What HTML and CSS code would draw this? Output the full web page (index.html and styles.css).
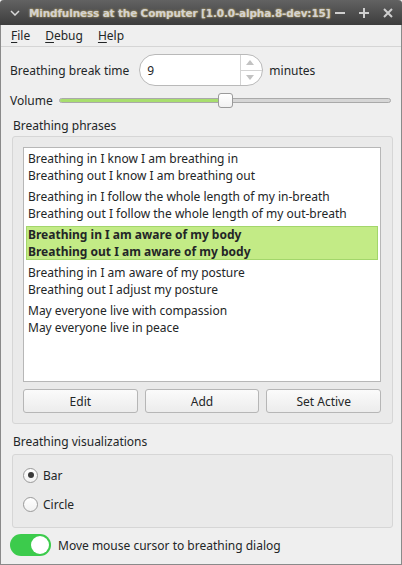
FILE: index.html
```html
<!DOCTYPE html>
<html>
<head>
<meta charset="utf-8">
<link rel="stylesheet" href="styles.css">
</head>
<body>
<div class="window">
  <div class="titlebar">
    <svg class="tb-menu" width="10" height="6" viewBox="0 0 10 6"><path d="M1 1 L5 5 L9 1" fill="none" stroke="#d8d8d8" stroke-width="1.5"/></svg>
    <span class="title">Mindfulness at the Computer [1.0.0-alpha.8-dev:15]</span>
    <span class="tb-btns">
      <svg width="10" height="10" viewBox="0 0 10 10"><path d="M0 5 H10" stroke="#cfcfcf" stroke-width="2"/></svg>
      <svg width="10" height="10" viewBox="0 0 10 10"><path d="M0 5 H10 M5 0 V10" stroke="#cfcfcf" stroke-width="2"/></svg>
      <svg width="10" height="10" viewBox="0 0 10 10"><path d="M1 1 L9 9 M9 1 L1 9" stroke="#cfcfcf" stroke-width="2"/></svg>
    </span>
  </div>
  <div class="menubar">
    <span class="menu"><u>F</u>ile</span>
    <span class="menu"><u>D</u>ebug</span>
    <span class="menu"><u>H</u>elp</span>
  </div>
  <div class="content">
    <div class="row spin-row">
      <span class="label">Breathing break time</span>
      <div class="spinbox">
        <span class="spin-val">9</span>
        <div class="spin-arrows">
          <div class="arrow up"><svg width="8" height="5" viewBox="0 0 8 5"><path d="M0 5 L4 0 L8 5Z" fill="#c2c2c2"/></svg></div>
          <div class="arrow down"><svg width="8" height="5" viewBox="0 0 8 5"><path d="M0 0 L4 5 L8 0Z" fill="#c2c2c2"/></svg></div>
        </div>
      </div>
      <span class="label unit">minutes</span>
    </div>
    <div class="row vol-row">
      <span class="label">Volume</span>
      <div class="slider">
        <div class="groove">
          <div class="fill" style="width: 49.5%"></div>
        </div>
        <div class="handle" style="left: 48%"></div>
      </div>
    </div>
    <div class="section-title">Breathing phrases</div>
    <div class="frame phrases-frame">
      <div class="list">
        <div class="item"><div>Breathing in I know I am breathing in</div><div>Breathing out I know I am breathing out</div></div>
        <div class="item"><div>Breathing in I follow the whole length of my in-breath</div><div>Breathing out I follow the whole length of my out-breath</div></div>
        <div class="item active"><div>Breathing in I am aware of my body</div><div>Breathing out I am aware of my body</div></div>
        <div class="item"><div>Breathing in I am aware of my posture</div><div>Breathing out I adjust my posture</div></div>
        <div class="item"><div>May everyone live with compassion</div><div>May everyone live in peace</div></div>
      </div>
      <div class="buttons">
        <button class="btn">Edit</button>
        <button class="btn">Add</button>
        <button class="btn">Set Active</button>
      </div>
    </div>
    <div class="section-title vis-title">Breathing visualizations</div>
    <div class="frame vis-frame">
      <div class="radio-row"><span class="radio checked"></span><span>Bar</span></div>
      <div class="radio-row"><span class="radio"></span><span>Circle</span></div>
    </div>
    <div class="row toggle-row">
      <span class="toggle"><span class="knob"></span></span>
      <span class="label">Move mouse cursor to breathing dialog</span>
    </div>
  </div>
</div>
</body>
</html>
```
FILE: styles.css
```css
* { box-sizing: border-box; }
html, body { margin: 0; padding: 0; }
body {
  width: 402px;
  height: 565px;
  background: #efefef;
  font-family: "Noto Sans", "DejaVu Sans", sans-serif;
  font-size: 12px;
  color: #232627;
  overflow: hidden;
}
.window {
  width: 402px;
  height: 565px;
  border: 1px solid #8a8a8a;
  border-top: none;
  border-radius: 4px 4px 0 0;
  display: flex;
  flex-direction: column;
}
.titlebar {
  height: 25px;
  margin: 0 -1px;
  background: linear-gradient(#626262, #3d3d3d);
  border-radius: 4px 4px 0 0;
  display: flex;
  align-items: center;
  padding: 0 9px 0 10px;
  color: #e6e6e6;
}
.tb-menu { margin-right: 9px; flex: none; }
.title {
  font-family: "DejaVu Sans", sans-serif;
  font-weight: bold;
  font-size: 10.5px;
  letter-spacing: -0.15px;
  white-space: nowrap;
  color: #d2d2d2;
  text-shadow: 0 0 2px #e8c868;
}
.tb-btns {
  margin-left: auto;
  display: flex;
  gap: 14px;
}
.menubar {
  height: 22px;
  display: flex;
  align-items: center;
  padding-left: 10px;
  border-bottom: 1px solid #d5d5d5;
}
.menu { margin-right: 15px; }
.menu u { text-decoration-thickness: 1px; text-underline-offset: 2px; }
.content {
  padding: 7px 10px 0 9px;
  display: flex;
  flex-direction: column;
}
.row { display: flex; align-items: center; }
.spin-row { gap: 10px; height: 32px; }
.spin-row .unit { margin-left: -4px; }
.spinbox {
  width: 124px;
  height: 32px;
  background: #fff;
  border: 1px solid #b9b9b9;
  border-radius: 16px;
  display: flex;
  align-items: stretch;
  overflow: hidden;
}
.spin-val { flex: 1; padding-left: 7px; display: flex; align-items: center; }
.spin-arrows {
  width: 22px;
  border-left: 1px solid #d3d3d3;
  display: flex;
  flex-direction: column;
}
.arrow { flex: 1; display: flex; align-items: center; justify-content: center; padding-right: 3px; }
.arrow.up { border-bottom: 1px solid #d3d3d3; }
.vol-row { gap: 6px; margin-top: 7px; height: 14px; }
.slider { position: relative; flex: 1; height: 14px; display: flex; align-items: center; }
.groove {
  width: 100%;
  height: 5px;
  background: #d6d6d6;
  border: 1px solid #a9a9a9;
  border-radius: 3px;
  overflow: hidden;
}
.fill { height: 100%; background: #a8de6e; border-right: 1px solid #7fbf4a; }
.handle {
  position: absolute;
  top: 0;
  width: 15px;
  height: 15px;
  background: linear-gradient(#ffffff, #f1f1f1);
  border: 1px solid #9a9a9a;
  border-radius: 3px;
}
.section-title { margin-top: 10px; padding-left: 3px; height: 18px; line-height: 18px; }
.frame {
  margin-top: 1px;
  margin-left: 2px;
  width: 381px;
  background: #eaeaea;
  border: 1px solid #d6d6d6;
  border-radius: 3px;
}
.phrases-frame {
  height: 288px;
  padding: 10px 11px 0 10px;
}
.list {
  height: 235px;
  background: #fff;
  border: 1px solid #b7b7b7;
  padding: 2px 2px;
}
.item {
  padding: 0 0 0 2px;
  margin-bottom: 4px;
  height: 34px;
  line-height: 17px;
}
.item.active {
  background: #c3eb86;
  box-shadow: inset 0 0 0 1px #a3d66b;
  font-weight: bold;
}
.buttons { display: flex; gap: 7px; margin-top: 7px; }
.btn {
  flex: 1;
  height: 24px;
  font-family: inherit;
  font-size: 12px;
  color: #232627;
  background: linear-gradient(#fbfbfb, #ececec);
  border: 1px solid #b6b6b6;
  border-radius: 3px;
  padding: 0;
}
.vis-title { margin-top: 9px; }
.vis-frame {
  margin-top: 3px;
  height: 74px;
  padding: 11px 10px;
  display: flex;
  flex-direction: column;
  gap: 11px;
}
.radio-row { display: flex; align-items: center; gap: 5px; height: 18px; }
.radio {
  width: 15px;
  height: 15px;
  border-radius: 50%;
  border: 1px solid #9a9a9a;
  background: linear-gradient(#fff, #f2f2f2);
  display: flex;
  align-items: center;
  justify-content: center;
}
.radio.checked::after {
  content: "";
  width: 6px;
  height: 6px;
  border-radius: 50%;
  background: #3a3a3a;
}
.toggle-row { gap: 7px; margin-top: 6px; height: 22px; }
.toggle {
  width: 41px;
  height: 22px;
  border-radius: 11px;
  background: #3ccb4c;
  position: relative;
  flex: none;
}
.knob {
  position: absolute;
  right: 2px;
  top: 2px;
  width: 18px;
  height: 18px;
  border-radius: 50%;
  background: #fff;
}
```
